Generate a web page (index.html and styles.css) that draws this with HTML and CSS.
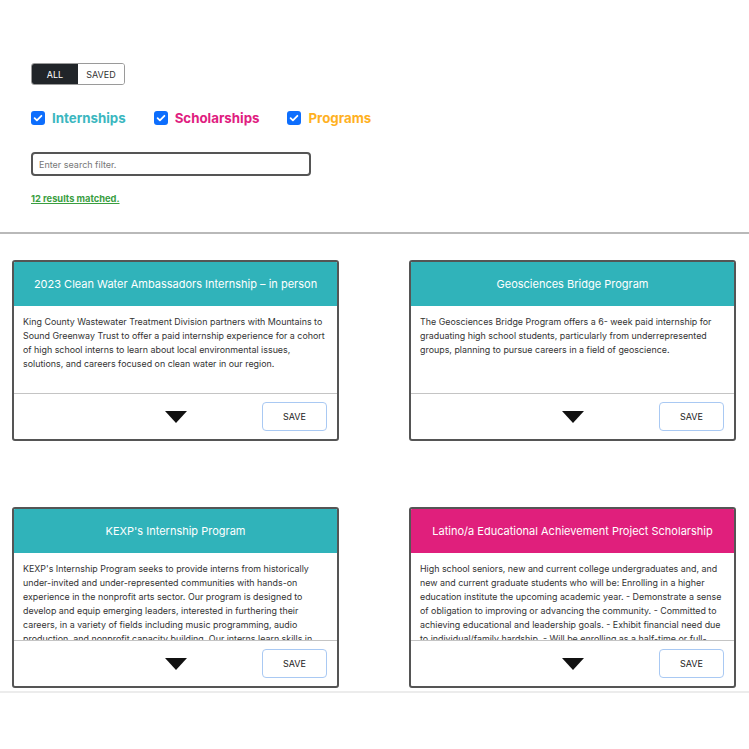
FILE: index.html
```html
<!DOCTYPE html>
<html lang="en">
<head>
  <meta charset="UTF-8">
  <meta name="viewport" content="width=device-width, initial-scale=1.0">
  <title>Opportunities</title>
  <link rel="stylesheet" href="styles.css">
</head>
<body>
  <div class="controls">
    <div class="toggle">
      <button class="toggle-btn active">ALL</button>
      <button class="toggle-btn">SAVED</button>
    </div>

    <div class="filters">
      <label class="filter">
        <span class="check"><svg viewBox="0 0 14 14" width="14" height="14"><path d="M3.6 7.2l2.3 2.2 4.5-4.6" fill="none" stroke="#fff" stroke-width="1.8" stroke-linecap="round" stroke-linejoin="round"/></svg></span>
        <span class="filter-name internships">Internships</span>
      </label>
      <label class="filter">
        <span class="check"><svg viewBox="0 0 14 14" width="14" height="14"><path d="M3.6 7.2l2.3 2.2 4.5-4.6" fill="none" stroke="#fff" stroke-width="1.8" stroke-linecap="round" stroke-linejoin="round"/></svg></span>
        <span class="filter-name scholarships">Scholarships</span>
      </label>
      <label class="filter">
        <span class="check"><svg viewBox="0 0 14 14" width="14" height="14"><path d="M3.6 7.2l2.3 2.2 4.5-4.6" fill="none" stroke="#fff" stroke-width="1.8" stroke-linecap="round" stroke-linejoin="round"/></svg></span>
        <span class="filter-name programs">Programs</span>
      </label>
    </div>

    <input class="search" type="text" placeholder="Enter search filter.">

    <p class="matched">12 results matched.</p>
  </div>

  <div class="results">
    <div class="grid">
      <div class="card">
        <div class="card-title teal">2023 Clean Water Ambassadors Internship – in person</div>
        <div class="card-body">King County Wastewater Treatment Division partners with Mountains to<br>Sound Greenway Trust to offer a paid internship experience for a cohort<br>of high school interns to learn about local environmental issues,<br>solutions, and careers focused on clean water in our region.</div>
        <div class="card-foot">
          <span class="arrow"></span>
          <button class="save">SAVE</button>
        </div>
      </div>

      <div class="card">
        <div class="card-title teal">Geosciences Bridge Program</div>
        <div class="card-body">The Geosciences Bridge Program offers a 6- week paid internship for<br>graduating high school students, particularly from underrepresented<br>groups, planning to pursue careers in a field of geoscience.</div>
        <div class="card-foot">
          <span class="arrow"></span>
          <button class="save">SAVE</button>
        </div>
      </div>

      <div class="card">
        <div class="card-title teal">KEXP's Internship Program</div>
        <div class="card-body scroll">KEXP's Internship Program seeks to provide interns from historically<br>under-invited and under-represented communities with hands-on<br>experience in the nonprofit arts sector. Our program is designed to<br>develop and equip emerging leaders, interested in furthering their<br>careers, in a variety of fields including music programming, audio<br>production, and nonprofit capacity building. Our interns learn skills in<br>broadcasting, media and arts administration while working alongside KEXP staff.</div>
        <div class="card-foot">
          <span class="arrow"></span>
          <button class="save">SAVE</button>
        </div>
      </div>

      <div class="card">
        <div class="card-title pink">Latino/a Educational Achievement Project Scholarship</div>
        <div class="card-body scroll">High school seniors, new and current college undergraduates and, and<br>new and current graduate students who will be: Enrolling in a higher<br>education institute the upcoming academic year. - Demonstrate a sense<br>of obligation to improving or advancing the community. - Committed to<br>achieving educational and leadership goals. - Exhibit financial need due<br>to individual/family hardship. - Will be enrolling as a half-time or full-<br>time student in Washington State.</div>
        <div class="card-foot">
          <span class="arrow"></span>
          <button class="save">SAVE</button>
        </div>
      </div>
    </div>
  </div>
</body>
</html>
```

FILE: styles.css
```css
body {
  margin: 0;
  font-family: Inter, "Noto Sans", sans-serif;
  color: #222;
  background: #fff;
}
.controls {
  padding: 63px 31px 0;
}
.toggle {
  display: flex;
  width: fit-content;
  border: 1px solid #9a9a9a;
  border-radius: 3px;
  overflow: hidden;
}
.toggle-btn {
  width: 46px;
  height: 20px;
  border: none;
  background: #fff;
  color: #333;
  font-family: inherit;
  font-size: 9px;
  padding: 0;
}
.toggle-btn.active {
  background: #212529;
  color: #fff;
}
.filters {
  display: flex;
  gap: 28px;
  margin-top: 25px;
}
.filter {
  display: flex;
  align-items: center;
  gap: 7px;
}
.check {
  width: 14px;
  height: 14px;
  border-radius: 3px;
  background: #0d6efd;
  display: flex;
}
.filter-name {
  font-size: 13.3px;
  font-weight: 700;
}
.internships {
  color: #3cb7bf;
}
.scholarships {
  color: #e0207f;
}
.programs {
  color: #ffb11f;
}
.search {
  display: block;
  margin-top: 26px;
  width: 280px;
  height: 24px;
  box-sizing: border-box;
  border: 2px solid #555;
  border-radius: 4px;
  padding: 0 6px;
  font-family: inherit;
  font-size: 9px;
}
.search::placeholder {
  color: #777;
}
.matched {
  margin: 17px 0 0;
  font-size: 9.3px;
  font-weight: 700;
  color: #3a9e3f;
  text-decoration: underline;
}
.results {
  margin-top: 28px;
  height: 457px;
  overflow: hidden;
  border-top: 2px solid #b9b9b9;
  border-bottom: 2px solid #ececec;
}
.grid {
  display: grid;
  grid-template-columns: 327px 327px;
  column-gap: 70px;
  row-gap: 66px;
  padding: 26px 12px;
}
.card {
  border: 2px solid #555;
  border-radius: 3px;
  overflow: hidden;
  background: #fff;
}
.card-title {
  height: 44px;
  line-height: 44px;
  text-align: center;
  color: #fff;
  font-size: 11px;
}
.teal {
  background: #30b3ba;
}
.pink {
  background: #e01f7c;
}
.card-body {
  height: 88px;
  box-sizing: border-box;
  padding: 9px;
  font-size: 8.9px;
  line-height: 14px;
  color: #333;
  border-bottom: 1px solid #c4c4c4;
  overflow: auto;
}
.card-body.scroll {
  padding-right: 6px;
}
.card-body::-webkit-scrollbar {
  width: 3px;
}
.card-body::-webkit-scrollbar-thumb {
  background: #777;
}
.card-foot {
  height: 45px;
  display: grid;
  grid-template-columns: 1fr auto 1fr;
  align-items: center;
  padding: 0 10px;
}
.arrow {
  grid-column: 2;
  width: 0;
  height: 0;
  border-left: 11px solid transparent;
  border-right: 11px solid transparent;
  border-top: 12px solid #111;
}
.save {
  grid-column: 3;
  justify-self: end;
  width: 65px;
  height: 29px;
  border: 1.5px solid #a9c9f3;
  border-radius: 4px;
  background: #fff;
  color: #222;
  font-family: inherit;
  font-size: 9px;
}
```
